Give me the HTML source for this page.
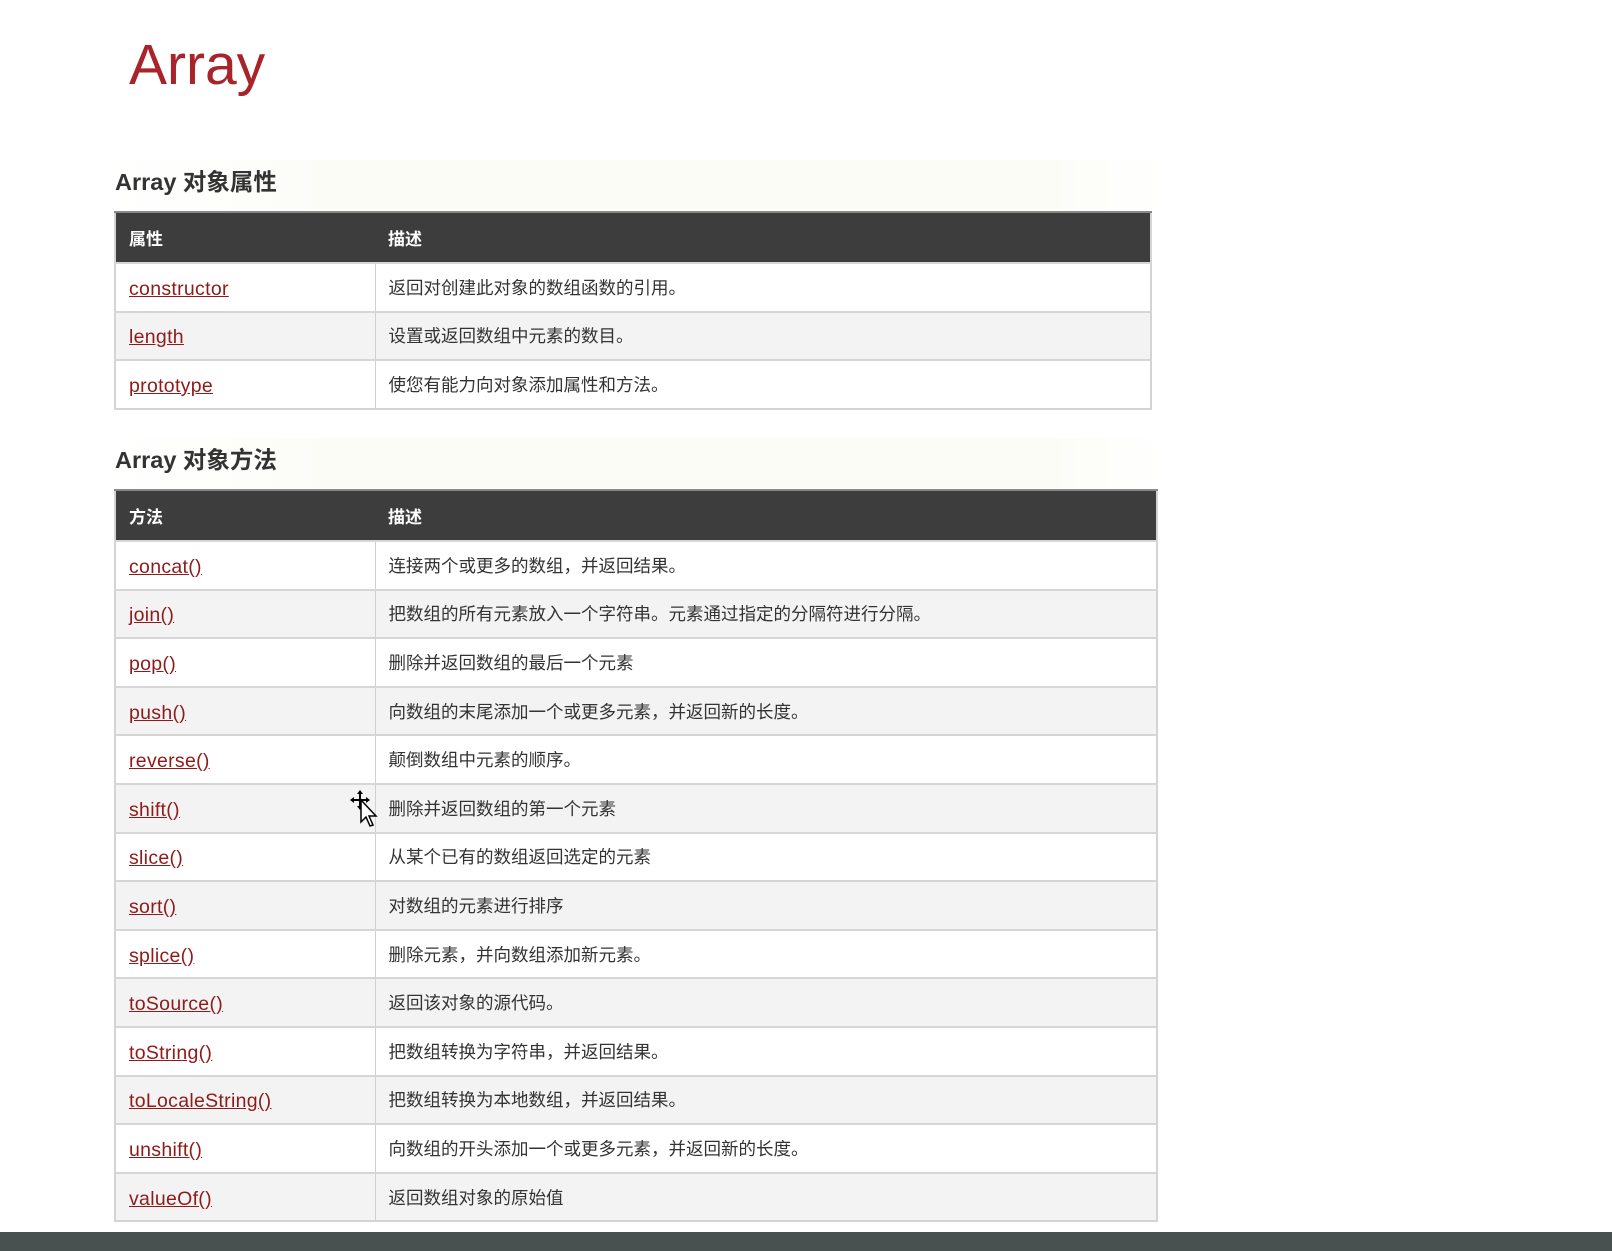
<!DOCTYPE html>
<html><head><meta charset="utf-8"><style>
*{margin:0;padding:0;box-sizing:border-box}
html,body{width:1612px;height:1251px;background:#fff;overflow:hidden;font-family:"Liberation Sans","Noto Sans CJK SC",sans-serif;position:relative}
h1{position:absolute;left:129px;top:32px;font-size:57px;font-weight:normal;color:#a8232a;font-family:"Liberation Sans",sans-serif}
.hbg{position:absolute;left:112px;width:1050px;height:50px;background:linear-gradient(90deg,#fff,#fcfcf7 20%,#fcfcf7 90%,#fff)}
h2{position:absolute;left:115px;font-size:23.5px;font-weight:bold;color:#333}
table{position:absolute;left:114px;border-collapse:collapse;font-size:17.5px;border:2px solid #d4d4d4;border-top:none}
th{background:#3d3d3d;color:#fff;text-align:left;font-weight:bold;height:51px;padding-left:13px;border-top:2px solid #888;font-size:17px}
td{height:48.6px;padding-left:13px;border-top:2px solid #d6d6d6;color:#333}
td:first-child{border-right:1px solid #d0d0d0}
tr:nth-child(odd) td{background:#f3f3f3}
a{color:#8f1a1a;text-decoration:underline;font-size:19.5px;letter-spacing:0.3px;position:relative;top:2px}
.bar{position:absolute;left:0;top:1232px;width:1612px;height:19px;background:#485150}
</style></head><body>
<h1>Array</h1>
<div class="hbg" style="top:160px"></div>
<h2 style="top:163px">Array 对象属性</h2>
<table style="top:211px;width:1038px">
<tr><th style="width:260px">属性</th><th>描述</th></tr>
<tr><td><a>constructor</a></td><td>返回对创建此对象的数组函数的引用。</td></tr>
<tr><td><a>length</a></td><td>设置或返回数组中元素的数目。</td></tr>
<tr><td><a>prototype</a></td><td>使您有能力向对象添加属性和方法。</td></tr>
</table>
<div class="hbg" style="top:438px"></div>
<h2 style="top:441px">Array 对象方法</h2>
<table style="top:489px;width:1044px">
<tr><th style="width:260px">方法</th><th>描述</th></tr>
<tr><td><a>concat()</a></td><td>连接两个或更多的数组，并返回结果。</td></tr>
<tr><td><a>join()</a></td><td>把数组的所有元素放入一个字符串。元素通过指定的分隔符进行分隔。</td></tr>
<tr><td><a>pop()</a></td><td>删除并返回数组的最后一个元素</td></tr>
<tr><td><a>push()</a></td><td>向数组的末尾添加一个或更多元素，并返回新的长度。</td></tr>
<tr><td><a>reverse()</a></td><td>颠倒数组中元素的顺序。</td></tr>
<tr><td><a>shift()</a></td><td>删除并返回数组的第一个元素</td></tr>
<tr><td><a>slice()</a></td><td>从某个已有的数组返回选定的元素</td></tr>
<tr><td><a>sort()</a></td><td>对数组的元素进行排序</td></tr>
<tr><td><a>splice()</a></td><td>删除元素，并向数组添加新元素。</td></tr>
<tr><td><a>toSource()</a></td><td>返回该对象的源代码。</td></tr>
<tr><td><a>toString()</a></td><td>把数组转换为字符串，并返回结果。</td></tr>
<tr><td><a>toLocaleString()</a></td><td>把数组转换为本地数组，并返回结果。</td></tr>
<tr><td><a>unshift()</a></td><td>向数组的开头添加一个或更多元素，并返回新的长度。</td></tr>
<tr><td><a>valueOf()</a></td><td>返回数组对象的原始值</td></tr>
</table>
<svg style="position:absolute;left:348px;top:790px" width="34" height="40" viewBox="0 0 34 40">
<path d="M12 2 L12 18 M4 10 L20 10" stroke="#000" stroke-width="2"/>
<path d="M12 0 L9 4 L15 4Z M12 20 L9 16 L15 16Z M2 10 L6 7 L6 13Z M22 10 L18 7 L18 13Z" fill="#000"/>
<path d="M13 10 L13 32 L18 27 L22 36 L25 35 L21 26 L28 26 Z" fill="#fff" stroke="#000" stroke-width="1.5"/>
</svg>
<div class="bar"></div>
</body></html>
